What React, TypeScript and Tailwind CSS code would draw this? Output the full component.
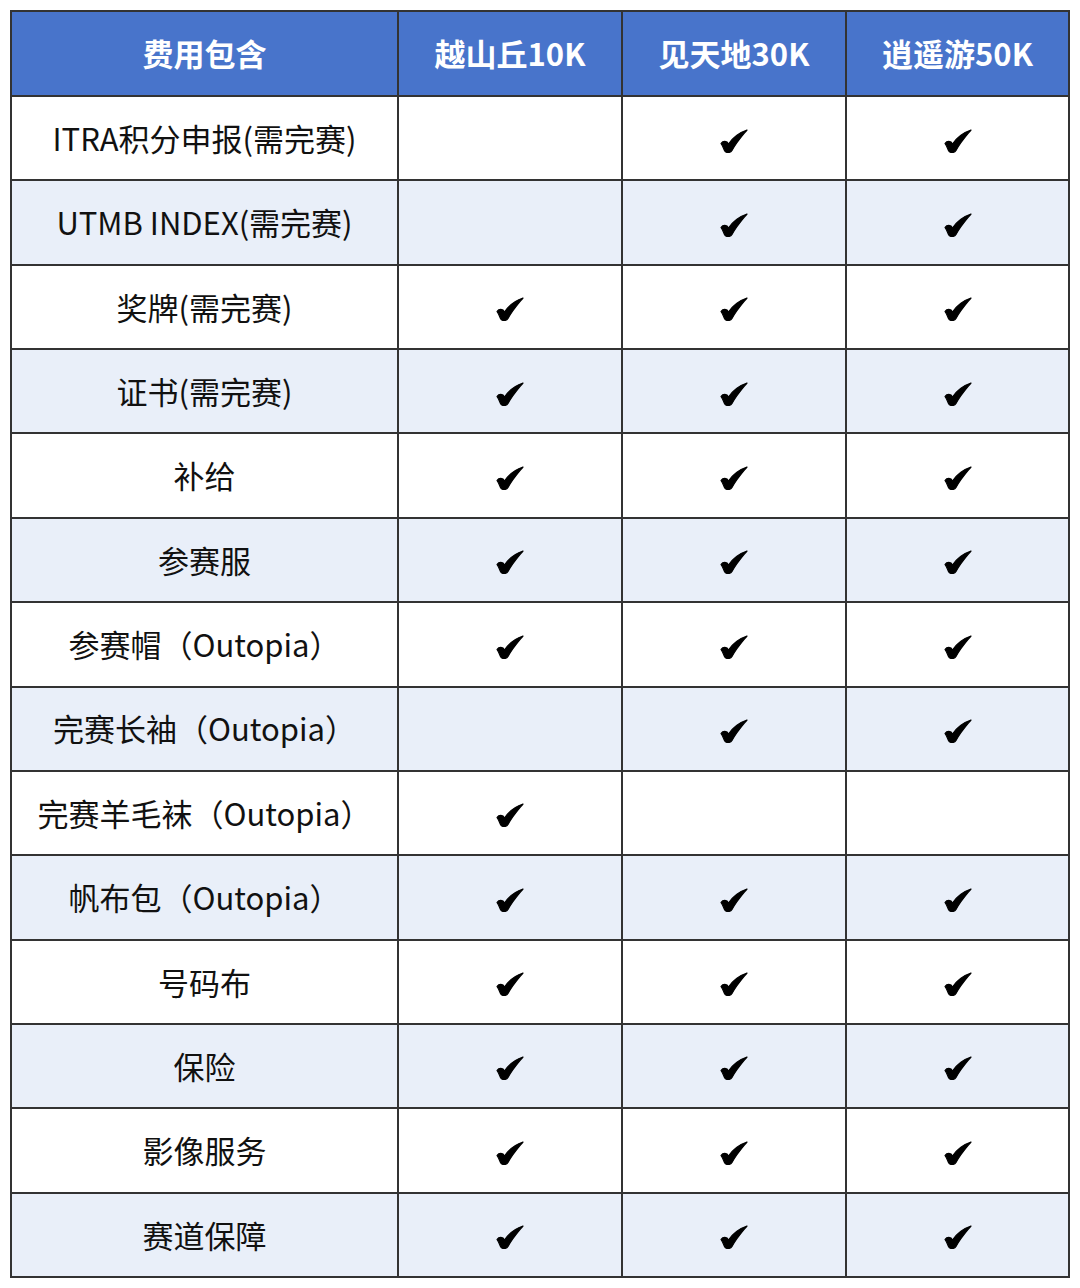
import React from "react";

const rows: [string, boolean, boolean, boolean][] = [
  ["ITRA积分申报(需完赛)", false, true, true],
  ["UTMB INDEX(需完赛)", false, true, true],
  ["奖牌(需完赛)", true, true, true],
  ["证书(需完赛)", true, true, true],
  ["补给", true, true, true],
  ["参赛服", true, true, true],
  ["参赛帽（Outopia）", true, true, true],
  ["完赛长袖（Outopia）", false, true, true],
  ["完赛羊毛袜（Outopia）", true, false, false],
  ["帆布包（Outopia）", true, true, true],
  ["号码布", true, true, true],
  ["保险", true, true, true],
  ["影像服务", true, true, true],
  ["赛道保障", true, true, true],
];

function Check() {
  return (
    <svg width="28" height="24" viewBox="-1 -1 28 24" className="inline-block mt-[4px]">
      <path
        d="M0 13.5 C2 10.5 6 10.5 7.5 14 C11.5 8 17 3 26 0 C21.5 5.5 15.5 12 11 20.5 C9.4 23.2 4.6 23.2 3.5 20.5 C2.5 18 1.5 15.5 0 13.5 Z"
        fill="#000"
        stroke="#000"
        strokeWidth="1.2"
        strokeLinejoin="round"
      />
    </svg>
  );
}

export default function App() {
  return (
    <div className="w-[1080px] h-[1288px] bg-white pt-[10px] pl-[10px]" style={{ fontFamily: '"Noto Sans CJK SC", "Noto Sans", sans-serif' }}>
      <table className="border-collapse border-2 border-[#333] w-[1060px] table-fixed">
        <colgroup>
          <col className="w-[387px]" />
          <col className="w-[224px]" />
          <col className="w-[224px]" />
          <col className="w-[223px]" />
        </colgroup>
        <thead>
          <tr className="h-[85px] bg-[#4874cb] text-white font-bold text-[31px]">
            <th className="border-2 border-[#333] text-center font-bold">费用包含</th>
            <th className="border-2 border-[#333] text-center font-bold">越山丘10K</th>
            <th className="border-2 border-[#333] text-center font-bold">见天地30K</th>
            <th className="border-2 border-[#333] text-center font-bold">逍遥游50K</th>
          </tr>
        </thead>
        <tbody>
          {rows.map((r, i) => (
            <tr key={i} className={`h-[84.36px] ${i % 2 === 1 ? "bg-[#e9eff9]" : "bg-white"}`}>
              <td className="border-2 border-[#333] text-center text-[31px] text-[#111] whitespace-nowrap p-0">{r[0]}</td>
              {[r[1], r[2], r[3]].map((c, j) => (
                <td key={j} className="border-2 border-[#333] text-center p-0 align-middle">
                  {c ? <Check /> : null}
                </td>
              ))}
            </tr>
          ))}
        </tbody>
      </table>
    </div>
  );
}
